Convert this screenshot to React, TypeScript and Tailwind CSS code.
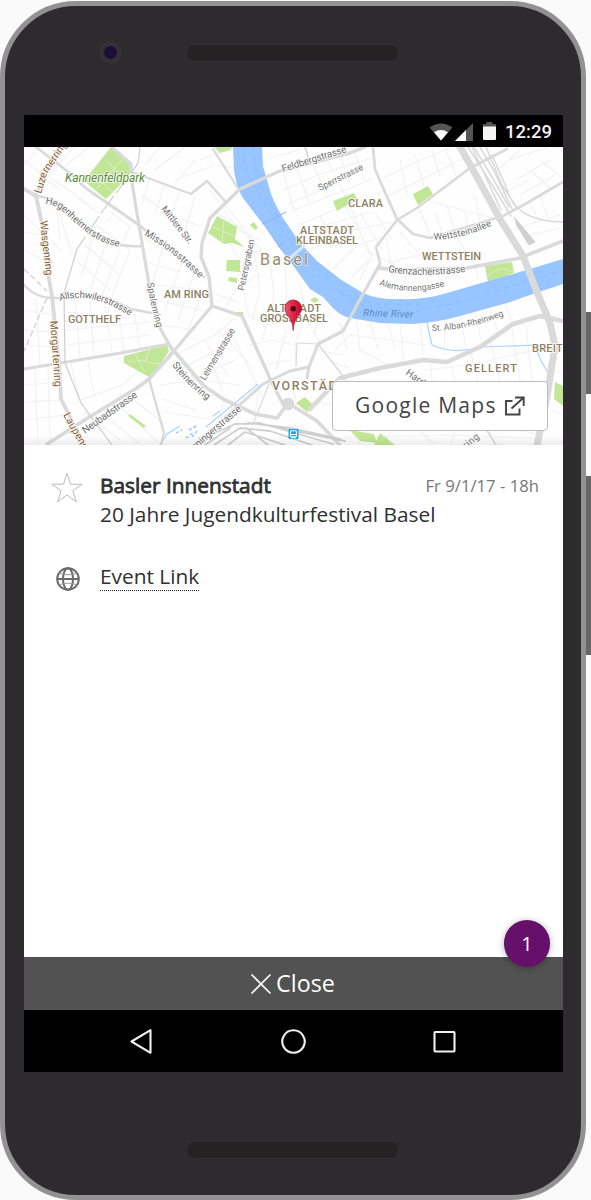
import React from "react";

const faint = [
  "M24 160L60 190M40 147L24 165M75 147L48 176L90 205M88 147L66 166M24 215L60 250M24 232L48 236M24 250L47 262M60 215L72 255M56 200L60 240M78 262L110 290M85 245L120 275M92 240L82 275M105 246L90 292M120 250L100 300M130 250L112 296M96 225L130 250M110 212L130 226L122 244M118 205L108 222M78 199L100 214",
  "M142 195L170 215L200 226M150 178L142 205M165 182L155 215M180 192L168 222M195 196L182 240M145 165L160 147M155 170L185 147M175 180L215 165M170 190L195 160M147 240L190 262M145 262L180 272M165 240L152 285M183 258L165 310M195 270L178 320M155 300L210 312M160 325L195 330M200 300L182 345M155 285L204 290",
  "M24 310L52 315M24 330L54 332M24 345L56 347M24 385L60 382M24 402L61 400M24 420L66 415M35 370L38 444M48 365L50 444M36 298L40 365M66 312L130 318M66 330L150 322M66 345L150 335M75 300L80 358M90 298L94 356M105 303L112 352M118 308L124 352M134 312L140 348M70 360L80 400L122 385L140 370M88 362L95 398M84 412L120 440M100 412L140 444M115 402L160 444M128 395L165 425M80 430L100 420",
  "M175 355L215 335L235 318M180 370L225 345M190 380L235 360M160 385L200 380L240 385M160 398L195 410M165 412L215 420M190 372L204 400M204 340L230 378M218 330L250 365M212 360L222 392M235 340L262 395M225 308L238 286L262 274M215 294L238 302M240 270L248 315L268 325L285 320M254 250L260 290L252 320M270 255L274 300L262 340M285 266L287 300L278 325M300 285L306 316L295 343L296 366M286 330L276 370M305 318L320 342M318 305L315 335M330 312L316 328M250 345L272 340L295 345M262 365L292 360",
  "M210 190L235 225L262 250M217 166L236 168M200 160L225 150M222 200L262 252M230 220L218 240M240 230L260 240M220 225L245 270M243 250L260 252M212 210L242 228",
  "M270 158L300 150M282 169L294 210L340 192L375 178M296 166L310 204M312 163L328 198M326 158L345 195L360 230M340 156L350 183M354 152L364 178M284 190L320 174L372 158M288 204L345 180M300 224L350 204L386 190M296 238L322 226L372 212M310 250L345 232L392 222M332 270L356 246L380 238M345 205L372 256L360 280M360 212L382 250M320 216L336 247M375 212L392 240M383 178L420 160L450 148M388 196L425 178L465 158M400 160L408 198M415 155L424 186M432 150L440 176M445 148L457 178M372 258L352 276M386 238L392 270M365 250L395 265",
  "M400 232L420 255L390 262M420 210L432 240M435 212L442 232M447 206L456 235L472 263M465 212L468 230M475 195L480 225M420 198L470 212L500 220M495 172L520 150M510 160L548 147M516 180L550 160M520 195L555 175M530 170L550 188M540 160L560 176M528 200L540 222M540 195L548 218M500 195L530 180M510 230L560 215M530 235L560 228M390 275L420 270L465 278M408 266L402 290M430 267L425 292M448 267L446 285M475 264L478 280M488 263L490 275",
  "M356 318L360 350L390 366M370 322L378 350M388 323L395 350M400 324L404 360M420 323L423 355M445 318L444 354M460 316L466 348M475 311L481 340M490 308L498 332M505 304L512 322M335 350L350 335L390 340L426 345M330 362L350 368M316 350L345 355M340 322L347 350M430 359L432 380M450 360L455 381M470 350L478 381M490 340L500 381M512 330L520 381M526 325L533 390M425 370L470 365L535 350M550 345L563 342M552 370L563 374M520 430L540 435M350 430L360 444M390 432L385 445M420 432L435 444M455 432L450 445M490 432L500 444M345 437L450 435L535 438M550 410L563 415M318 390L334 382M318 402L334 405M296 400L292 385M223 397L220 425M240 406L235 440M255 412L260 385",
];

const major: [string, number][] = [
  ["M36 147L67 171L87 189L139 225L204 277", 2.8],
  ["M112 147L131 164L132 183L139 225L151 296L159 326L172 350", 3.2],
  ["M132 172L191 194L207 181L225 201", 2.4],
  ["M24 189L36 196L44 233L49 279L52 296L59 363L61 399L71 419L84 445", 3.8],
  ["M36 195L45 174L64 147", 3],
  ["M36 196C60 198 68 215 91 234Q112 248 142 246", 2.6],
  ["M24 285Q36 298 52 298L78 298Q98 293 112 300L131 309L151 313", 2.4],
  ["M213 149L237 187", 2.2],
  ["M365 147L350 153L280 171L240 189L210 218L202 243L201 257L209 277L212 306L242 316L272 383L283 404", 3.4],
  ["M305 147L308 157", 2],
  ["M373 147L375 169L380 181L397 219L413 234L430 238L503 216L527 203L563 182", 2.8],
  ["M380 263L376 247L397 220L417 208L470 168L507 149", 2.6],
  ["M378 268L400 270L467 268L520 258L563 241", 3.6],
  ["M380 264L363 294L343 331L318 344L309 367L307 378", 3.2],
  ["M309 367L290 371L263 384L200 440", 3],
  ["M318 344L343 376", 1.5],
  ["M296 366L297 343L318 344", 1.2],
  ["M310 409L340 378L380 368L423 360L447 362L480 347L513 324L540 316L563 321", 4.6],
  ["M174 351L204 386L223 399L255 414L277 418L288 403L317 421L340 445", 3.6],
  ["M24 369L121 353L169 344L174 351L212 306", 3],
  ["M174 351L149 379L137 388L91 416L47 444", 3.8],
  ["M149 379L164 433L161 445", 2.4],
  ["M269 384L253 424", 1.2],
  ["M340 378L410 410M486 429L496 445", 1.8],
];

const parks = [
  "M111 147L129 164L131 174L106 199L84 181Z",
  "M214 147H232L231 150L220 153Z",
  "M217 216L237 227L235 239L244 247L232 243L224 244L208 233Z",
  "M227 260H240V272L226 271Z",
  "M229 277L237 278V283L228 281Z",
  "M250 225L254 222L258 228L255 230Z",
  "M333 201L354 193L357 199L337 211Z",
  "M413 194L428 186L433 194L418 205Z",
  "M485 266L512 262L514 273L488 282Z",
  "M124 356L167 345L169 351L151 378L124 363Z",
  "M130 414L146 426L144 428L128 416Z",
  "M296 403L305 397L314 406L307 412Z",
  "M310 300L315 297L319 300L315 303Z",
  "M350 430L374 434L377 443L360 441Z",
  "M555 382L563 386V406L554 399Z",
  "M380 433L395 445H374Z",
  "M236 312H243V315H236Z",
];

const paths = {
  luz: "M41 194L47 174L68 143",
  heg: "M45 204C62 205 66 217 88 233Q99 242 119 247",
  missions: "M144 235Q172 250 201 280",
  mittlere: "M161 209L190 246",
  wasgen: "M40 221L46 276",
  morgarten: "M50 321L55 388",
  laupen: "M63 415L92 467",
  allsch: "M60 301Q92 290 133 318",
  spalen: "M147 283L152 310L158 332",
  peters: "M244 291L255 238",
  leimen: "M205 381L237 328",
  steinen: "M172 365Q188 387 210 402",
  neubad: "M85 434L140 395",
  binning: "M188 456L243 409",
  feld: "M283 172L350 151",
  sperr: "M320 191L366 168",
  wett: "M434 240Q462 239 493 225",
  grenz: "M388 272Q428 278 470 271",
  aleman: "M379 285Q412 297 447 285",
  rhine: "M363 316L415 318",
  alban: "M432 331Q468 330 506 315",
  hard: "M405 374L434 395",
  ing: "M466 449L484 434",
};

const streets: [keyof typeof paths, string, number, number, string][] = [
  ["luz", "Luzernerring", 10.6, 57, "#8a5d31"],
  ["heg", "Hegenheimerstrasse", 9.8, 87, "#6c6c6c"],
  ["missions", "Missionsstrasse", 9.8, 71, "#6c6c6c"],
  ["mittlere", "Mittlere Str.", 9.2, 45, "#747474"],
  ["wasgen", "Wasgenring", 10.6, 55, "#8a5d31"],
  ["morgarten", "Morgartenring", 10.6, 66, "#8a5d31"],
  ["laupen", "Laupenring", 10.6, 53, "#8a5d31"],
  ["allsch", "Allschwilerstrasse", 9.8, 74, "#6c6c6c"],
  ["spalen", "Spalenring", 9.6, 46, "#747474"],
  ["peters", "Petersgraben", 9.2, 52, "#747474"],
  ["leimen", "Leimenstrasse", 9.6, 59, "#747474"],
  ["steinen", "Steinenring", 9.8, 50, "#6c6c6c"],
  ["neubad", "Neubadstrasse", 10.2, 65, "#6c6c6c"],
  ["binning", "Binningerstrasse", 9.8, 71, "#6c6c6c"],
  ["feld", "Feldbergstrasse", 9.8, 67, "#6c6c6c"],
  ["sperr", "Sperrstrasse", 9.2, 49, "#747474"],
  ["wett", "Wettsteinallee", 9.4, 60, "#6c6c6c"],
  ["grenz", "Grenzacherstrasse", 9.8, 78, "#6c6c6c"],
  ["aleman", "Alemannengasse", 8.9, 67, "#747474"],
  ["alban", "St. Alban-Rheinweg", 8.9, 74, "#747474"],
  ["hard", "Hardstr", 9.8, 33, "#6c6c6c"],
  ["ing", "ring", 9.6, 18, "#747474"],
];

const districts: [string, number, number, number, number][] = [
  ["CLARA", 348, 207, 35, 11],
  ["ALTSTADT", 300, 233.5, 54, 11],
  ["KLEINBASEL", 296, 243.5, 62, 11],
  ["WETTSTEIN", 422, 260, 59, 11],
  ["AM RING", 164, 298, 45, 11],
  ["GOTTHELF", 68, 323, 53, 11],
  ["ALTSTADT", 267, 311.5, 54, 11],
  ["GROSSBASEL", 260, 321.5, 68, 11],
  ["VORSTÄDTE", 272, 390, 82, 12.4],
  ["GELLERT", 465, 372, 52, 11],
  ["BREITE", 532, 352, 37, 11],
];

function CityMap() {
  return (
    <svg viewBox="24 147 539 298" className="block h-full w-full" fontFamily="Roboto, sans-serif">
      <defs>
        {Object.entries(paths).map(([id, d]) => (
          <path key={id} id={id} d={d} />
        ))}
        <linearGradient id="pinFill" x1="0" x2="1">
          <stop offset="0" stopColor="#f0556e" />
          <stop offset="0.45" stopColor="#e32749" />
          <stop offset="1" stopColor="#b80f31" />
        </linearGradient>
        <linearGradient id="fade" x1="0" x2="0" y1="0" y2="1">
          <stop offset="0" stopColor="#000" stopOpacity="0" />
          <stop offset="1" stopColor="#000" stopOpacity="0.07" />
        </linearGradient>
      </defs>
      <rect x="24" y="147" width="539" height="298" fill="#fefefe" />
      <g fill="none" stroke="#f1f1f1" strokeWidth="1.1">
        {faint.map((d) => (
          <path key={d} d={d} />
        ))}
      </g>
      <g fill="#c1e696">
        {parks.map((d) => (
          <path key={d} d={d} />
        ))}
      </g>
      <path
        d="M96 190L122 160M92 173L115 194M105 160L126 180M135 354L145 372M150 349L145 362L160 364M128 362L145 360M224 219L222 242M213 227L235 236M488 276Q500 264 513 272"
        fill="none"
        stroke="#dcf2c1"
        strokeWidth="1"
      />
      <path
        d="M233 147L234 170Q236 187 243 198L263 224L278 246L292 264L310 289L323 297L333 308Q341 316 350 318L380 323L413 324Q440 322 460 316L507 303L527 296L563 284V259L513 274L447 293Q425 300 400 299Q378 300 363 293L340 279L317 261L300 243L283 218Q272 200 269 187L263 166L262 147Z"
        fill="#98c5ff"
      />
      <path
        d="M243 147L246 172L272 215L300 255L330 288L362 305L412 312L460 302L563 270M253 147L257 180L278 218L308 258L340 292L375 304L420 304"
        fill="none"
        stroke="#86b7f6"
        strokeWidth="0.8"
        strokeDasharray="6 4"
      />
      <path
        d="M427 323L432 345Q455 355 480 347L540 345M536 348L541 361L549 374M161 443L167 434L180 426M206 427L258 384M213 416L220 411"
        fill="none"
        stroke="#aed2fa"
        strokeWidth="1.2"
      />
      <path d="M176 433L182 430M186 438L193 433M189 430L196 426M192 437L197 431" stroke="#9cc8fa" strokeWidth="1.6" strokeDasharray="3 2" />
      <path d="M262 224L286 212M278 247L284 242" stroke="#8fbaf0" strokeWidth="1.2" />
      <path d="M288 260L306 244" stroke="#dce6f0" strokeWidth="3" />
      <g fill="none" stroke="#dadada" strokeLinejoin="round" strokeLinecap="round">
        {major.map(([d, w]) => (
          <path key={d} d={d} strokeWidth={w} />
        ))}
        <path d="M460 147L472 168L500 219L523 256L537 292L550 323L555 346L547 396L537 446" strokeWidth="7" />
        <path d="M468 147L491 183L511 216M474 147L495 182L509 207M480 147L494 171L513 211M486 147L502 185L517 208M472 147L501 210M492 155L507 189Q512 208 530 216Q545 222 563 222" strokeWidth="1.6" />
        <path d="M514 217L535 242L529 245L516 224" fill="#cfcfcf" stroke="#cfcfcf" strokeWidth="1" />
        <path d="M200 440L235 424L260 423L333 444M214 445L240 428L270 431L312 445M228 445L245 432L285 445M205 445L230 428M246 428L268 445M260 424L345 441M248 423L290 428L340 439" stroke="#cfcfcf" strokeWidth="1.8" />
        <circle cx="288" cy="404" r="4" strokeWidth="4.5" />
      </g>
      <path d="M140 147L138 163L132 172L104 209L77 249L64 293L65 363L81 403L112 445" fill="none" stroke="#cecece" strokeWidth="1.2" />
      <path d="M138 150L134 170L104 209L77 249" fill="none" stroke="#fff" strokeWidth="2" strokeDasharray="3 22" />
      <path d="M24 269L47 291M47 298L24 351" fill="none" stroke="#cecece" strokeWidth="1.2" strokeDasharray="6 3" />

      <g fontWeight="400" stroke="#fff" strokeWidth="1.6" strokeLinejoin="round" paintOrder="stroke">
        {streets.map(([id, label, size, length, color]) => (
          <text key={id} fontSize={size} fill={color} textLength={length}>
            <textPath href={`#${id}`} textLength={length}>
              {label}
            </textPath>
          </text>
        ))}
        {districts.map(([label, x, y, length, size]) => (
          <text key={`${label}${y}`} x={x} y={y} fontSize={size} fontWeight="500" fill="#8d7f5f" textLength={length}>
            {label}
          </text>
        ))}
        <text x="260" y="264.5" fontSize="16" fill="#9a8a6b" textLength="48" strokeWidth="1">Basel</text>
        <text x="65" y="182" fontSize="12.2" fontStyle="italic" fill="#558c3a" textLength="80">Kannenfeldpark</text>
      </g>
      <text fontSize="10" fontStyle="italic" fill="#5887c5">
        <textPath href="#rhine" textLength="50">Rhine River</textPath>
      </text>

      <rect x="288.5" y="429" width="10" height="10" rx="1" fill="#1da5e6" />
      <rect x="290.5" y="430.8" width="6" height="6" rx="1" fill="none" stroke="#fff" strokeWidth="1.1" />
      <path d="M290.5 434.5h6M291 437.8h5" stroke="#fff" strokeWidth="1" />

      <path
        d="M293.2 330.5C292.6 322 290.8 320 288 315.6C286.2 313 284.9 311 284.9 308.2A8.3 8.3 0 0 1 301.5 308.2C301.5 311 300.2 313 298.4 315.6C295.6 320 293.8 322 293.2 330.5Z"
        fill="url(#pinFill)"
        stroke="#a60f2d"
        strokeWidth="0.7"
      />
      <circle cx="293.2" cy="308.8" r="2.7" fill="#4c0716" />
      <rect x="24" y="436" width="539" height="9" fill="url(#fade)" />
    </svg>
  );
}

function StatusBar() {
  return (
    <div className="flex h-8 items-center justify-end bg-black pr-[11px] font-['Roboto',sans-serif] text-white">
      <svg width="24" height="18" viewBox="0 0 24 18" className="mt-px">
        <path d="M0.5 4.5Q12 -3.5 23.5 4.5L12 17.5Z" fill="#555" />
        <path d="M5 9.3Q12 4.7 19 9.3L12 17.5Z" fill="#fff" />
      </svg>
      <svg width="18" height="18" viewBox="0 0 18 18" className="ml-[2px] mt-px">
        <path d="M18 0V18H0Z" fill="#555" />
        <path d="M11 7V18H0Z" fill="#fff" />
      </svg>
      <svg width="13" height="18" viewBox="0 0 13 18" className="ml-[10px]">
        <path d="M3.5 0H9.5V2H13V5H0V2H3.5Z" fill="#555" />
        <path d="M0 4.5H13V17Q13 18 12 18H1Q0 18 0 17Z" fill="#f5f5f5" />
      </svg>
      <span className="ml-[9px] mt-px w-[47px] whitespace-nowrap text-[18.5px] font-medium leading-8 text-[#f2f2f2]">12:29</span>
    </div>
  );
}

function EventDetails() {
  return (
    <section className="flex h-[512px] flex-col bg-white pt-[25px] text-[20.85px] text-[#303030]">
      <div className="flex pl-[27px] pr-[24px]">
        <svg width="32" height="32" viewBox="0 0 32 32" className="mt-[2px] shrink-0">
          <path d="M16 1.4L19.5 12.2H31.2L21.8 18.8L25.4 29.9L16 23L6.6 29.9L10.2 18.8L0.8 12.2H12.5Z" fill="none" stroke="#bcbcbc" strokeWidth="1" />
        </svg>
        <div className="ml-[17px] flex-1">
          <div className="flex items-center justify-between pt-px">
            <h1 className="whitespace-nowrap leading-[29px] [-webkit-text-stroke:0.8px_#303030]">Basler Innenstadt</h1>
            <time className="whitespace-nowrap text-[16.7px] leading-[29px] text-[#777]">Fr 9/1/17 - 18h</time>
          </div>
          <p className="whitespace-nowrap leading-[28px]">20 Jahre Jugendkulturfestival Basel</p>
        </div>
      </div>
      <div className="mt-[34px] flex pl-[32px]">
        <svg width="24" height="24" viewBox="0 0 24 24" className="mt-[5px] shrink-0" fill="none" stroke="#6a6a6a" strokeWidth="2">
          <circle cx="12" cy="12" r="10.8" />
          <ellipse cx="12" cy="12" rx="5" ry="10.8" />
          <path d="M1.5 12H22.5" />
          <path d="M3.2 6.2Q12 9.5 20.8 6.2M3.2 17.8Q12 14.5 20.8 17.8" strokeWidth="1" stroke="#999" />
        </svg>
        <a className="ml-5 h-[29px] whitespace-nowrap border-b border-dotted border-[#222] leading-[28px]">Event Link</a>
      </div>
    </section>
  );
}

function NavigationBar() {
  return (
    <nav className="flex h-[62px] items-center justify-between bg-black px-[105px]">
      {["M21.5 2.2V24.8L2.5 13.5Z", "M13.5 2.3A11.2 11.2 0 1 1 13.49 2.3Z", "M4.2 4H22.8Q23.5 4 23.5 4.7V22.8Q23.5 23.5 22.8 23.5H4.2Q3.5 23.5 3.5 22.8V4.7Q3.5 4 4.2 4Z"].map((d) => (
        <svg key={d} width="27" height="27" viewBox="0 0 27 27">
          <path d={d} fill="none" stroke="#f0f0f0" strokeWidth="2.1" strokeLinejoin="round" />
        </svg>
      ))}
    </nav>
  );
}

export default function App() {
  return (
    <main className="flex h-[1200px] w-[591px] overflow-hidden bg-[#fafafa] pt-px font-['Open_Sans',sans-serif]">
      <div className="flex h-[1199px] w-[586px] shrink-0 flex-col rounded-[76px] border-[5px] border-[#929292] bg-[#2d2b2d] px-[19px]">
        <header className="flex h-[109px] items-start">
          <div className="ml-[75px] mt-[35px] flex size-[23px] items-center justify-center rounded-full bg-[#343134]">
            <div className="size-[13px] rounded-full bg-[#1b0f33]" />
          </div>
          <div className="ml-[64px] mt-[38px] h-[18px] w-[213px] rounded-[8px] border border-[#333033] bg-[#242222]" />
        </header>
        <div className="flex h-[957px] w-[539px] shrink-0 flex-col">
          <StatusBar />
          <div className="relative h-[298px] overflow-hidden">
            <CityMap />
            <a className="absolute bottom-[14px] right-[15px] flex h-[50px] w-[216px] items-center rounded-[4px] border border-[#bbb] bg-white pl-[22px] text-[21px] tracking-[1.25px] text-[#444]">
              <span className="w-[149px] whitespace-nowrap">Google Maps</span>
              <svg width="21" height="20" viewBox="0 0 21 20" fill="none" stroke="#444" strokeWidth="1.9" className="shrink-0">
                <path d="M8.5 5H2V18.5H15.5V12.5M11 1.5H19.7V10M19.7 1.5L7.5 12.5" />
              </svg>
            </a>
          </div>
          <EventDetails />
          <div className="relative flex h-[53px] items-center justify-center bg-[#525252] text-[23.3px] text-white">
            <svg width="20" height="20" viewBox="0 0 20 20" className="mr-[5px] mt-px">
              <path d="M1 1L19 19M19 1L1 19" stroke="#fff" strokeWidth="1.7" strokeLinecap="round" />
            </svg>
            <span className="mr-px">Close</span>
            <div className="absolute -top-[37px] right-[13px] flex h-[47px] w-[46px] items-center justify-center rounded-full bg-[#65106a] text-[20px] shadow-[0_1px_7px_rgba(0,0,0,0.3)]">1</div>
          </div>
          <NavigationBar />
        </div>
        <div className="ml-[162px] mt-[69px] h-[18px] w-[213px] shrink-0 rounded-[8px] border border-[#333033] bg-[#242222]" />
      </div>
      <aside className="flex w-[5px] flex-col pt-[311px]">
        <div className="h-[82px] bg-[#676767]" />
        <div className="mt-[82px] h-[179px] bg-[#676767]" />
      </aside>
    </main>
  );
}
